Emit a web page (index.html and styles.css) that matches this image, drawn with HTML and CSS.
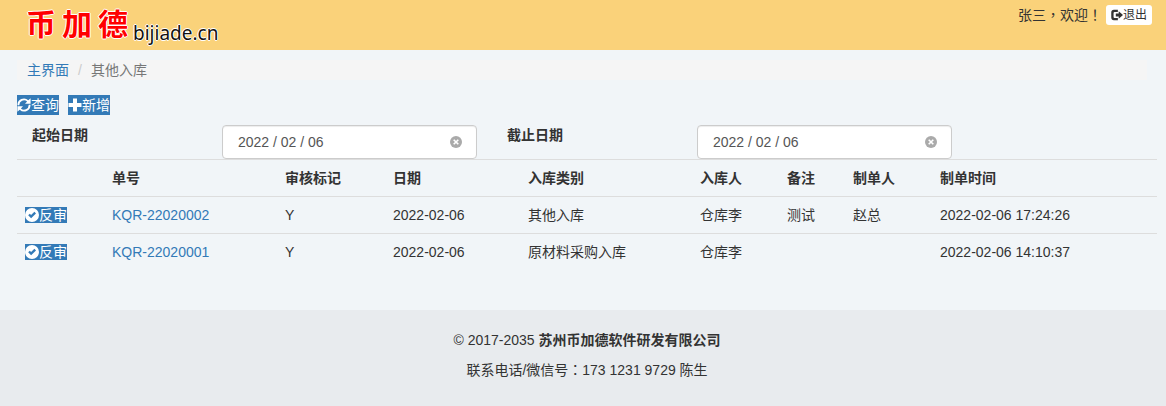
FILE: index.html
```
<!DOCTYPE html>
<html lang="zh-CN">
<head>
    <meta charset="utf-8">
    <title>其他入库</title>
    <meta name="viewport" content="width=device-width, initial-scale=1">
    <link rel="stylesheet" href="styles.css">
</head>
<body>
    <!-- shared icons -->
    <svg class="sprite" aria-hidden="true">
        <symbol id="icon-logout" viewBox="0 0 14 14">
            <path d="M8 1H3.400Q.3 1 .3 4v6q0 3 3.100 3H8v-2.400H4.200q-1.200 0-1.200-1.200V4.800q0-1.200 1.200-1.200H8z"/>
            <path d="M9 2.500L14 7l-5 4.500V8.800H5.600V5.200H9z"/>
        </symbol>
        <symbol id="icon-refresh" viewBox="0 0 14 14">
            <path d="M.5 7.200A6.400 6.400 0 0 1 11.300 2.300L13.600.2v5.600H8l2.100-2.200A4.700 4.700 0 0 0 2.300 7.200z"/>
            <path d="M13.500 6.800a6.400 6.400 0 0 1-10.800 4.900L.4 13.800V8.200H6l-2.100 2.200a4.700 4.700 0 0 0 7.800-3.600z"/>
        </symbol>
        <symbol id="icon-plus" viewBox="0 0 14 14">
            <path d="M5 .5h4V5h4.500v4H9v4.500H5V9H.5V5H5z"/>
        </symbol>
        <symbol id="icon-ok" viewBox="0 0 14 14">
            <path fill-rule="evenodd" d="M7 0a7 7 0 1 1 0 14A7 7 0 0 1 7 0zM3.200 7.200l2.900 3L11 5.400 9.400 3.800 6.100 7.100 4.800 5.700z"/>
        </symbol>
        <symbol id="icon-clear" viewBox="0 0 12 12">
            <circle cx="6" cy="6" r="6"/>
            <path d="M3.700 3.700l4.600 4.600M8.300 3.700L3.700 8.300" stroke="#fff" stroke-width="1.600"/>
        </symbol>
    </svg>

    <header class="topbar">
        <a class="logo" href="#"><span class="logo-name"><span>币</span><span>加</span><span>德</span></span><span class="logo-site">bijiade.cn</span></a>
        <div class="user">
            <span>张三<span class="punct" lang="zh-TW">，</span>欢迎<span class="punct" lang="zh-TW">！</span></span>
            <button type="button" class="btn-logout"><svg class="icon"><use href="#icon-logout"/></svg>退出</button>
        </div>
    </header>

    <main class="content">
        <ol class="breadcrumb">
            <li><a href="#">主界面</a></li>
            <li class="active">其他入库</li>
        </ol>

        <form>
            <div class="toolbar">
                <button type="button" class="btn-tool"><svg class="icon"><use href="#icon-refresh"/></svg>查询</button>
                <button type="button" class="btn-tool"><svg class="icon"><use href="#icon-plus"/></svg>新增</button>
            </div>
            <div class="filters">
                <label for="date-from">起始日期</label>
                <div class="date-box">
                    <input type="text" id="date-from" value="2022 / 02 / 06">
                    <button type="button" class="clear" aria-label="清除"><svg><use href="#icon-clear"/></svg></button>
                </div>
                <label for="date-to">截止日期</label>
                <div class="date-box">
                    <input type="text" id="date-to" value="2022 / 02 / 06">
                    <button type="button" class="clear" aria-label="清除"><svg><use href="#icon-clear"/></svg></button>
                </div>
            </div>
        </form>

        <table class="table">
            <thead>
                <tr>
                    <th class="col-action"></th>
                    <th class="col-no">单号</th>
                    <th class="col-mark">审核标记</th>
                    <th class="col-date">日期</th>
                    <th class="col-type">入库类别</th>
                    <th class="col-person">入库人</th>
                    <th class="col-note">备注</th>
                    <th class="col-person">制单人</th>
                    <th>制单时间</th>
                </tr>
            </thead>
            <tbody>
                <tr>
                    <td><button type="button" class="btn-row"><svg class="icon"><use href="#icon-ok"/></svg>反审</button></td>
                    <td><a href="#">KQR-22020002</a></td>
                    <td>Y</td>
                    <td>2022-02-06</td>
                    <td>其他入库</td>
                    <td>仓库李</td>
                    <td>测试</td>
                    <td>赵总</td>
                    <td>2022-02-06 17:24:26</td>
                </tr>
                <tr>
                    <td><button type="button" class="btn-row"><svg class="icon"><use href="#icon-ok"/></svg>反审</button></td>
                    <td><a href="#">KQR-22020001</a></td>
                    <td>Y</td>
                    <td>2022-02-06</td>
                    <td>原材料采购入库</td>
                    <td>仓库李</td>
                    <td></td>
                    <td></td>
                    <td>2022-02-06 14:10:37</td>
                </tr>
            </tbody>
        </table>
    </main>

    <footer class="footer">
        <p>© 2017-2035 <strong>苏州币加德软件研发有限公司</strong></p>
        <p>联系电话/微信号<span class="punct" lang="zh-TW">：</span>173 1231 9729 陈生</p>
    </footer>
</body>
</html>
```
FILE: styles.css
```
* {
    box-sizing: border-box;
}
body {
    margin: 0;
    min-height: 100vh;
    display: flex;
    flex-direction: column;
    font-family: "Liberation Sans", "Noto Sans CJK SC", sans-serif;
    font-size: 14px;
    line-height: 20px;
    color: #333;
    background: #f1f5f8;
}
a {
    color: #337ab7;
    text-decoration: none;
}
button {
    display: flex;
    align-items: center;
    border: none;
    padding: 0;
    font: inherit;
    cursor: pointer;
}
.sprite {
    display: none;
}
.icon {
    width: 14px;
    height: 14px;
    flex: none;
    fill: currentColor;
}
/* centred full-width punctuation */
.punct {
    font-family: "Noto Sans CJK TC", sans-serif;
    line-height: 1;
}

/* top bar */
.topbar {
    display: flex;
    justify-content: space-between;
    align-items: flex-start;
    height: 50px;
    padding: 0 14px 0 26px;
    background: #fad27a;
}
.logo {
    display: flex;
    align-items: flex-start;
    color: #111;
    text-shadow: 1px 0 #fff, -1px 0 #fff, 0 1px #fff, 0 -1px #fff;
}
.logo-name {
    display: flex;
    gap: 6px;
    padding-right: 5px;
    font-size: 30px;
    line-height: 50px;
    font-weight: bold;
    color: #f00;
}
.logo-site {
    font-family: "Noto Sans", sans-serif;
    font-size: 19px;
    line-height: 66px;
}
.user {
    display: flex;
    gap: 4px;
    padding-top: 5px;
}
.btn-logout {
    height: 20px;
    padding: 0 5px;
    border-radius: 3px;
    font-size: 12px;
    color: #333;
    background: #fff;
}
.btn-logout .icon {
    width: 12px;
    height: 12px;
}

/* content */
.content {
    flex: 1;
    padding: 10px 9px 0 17px;
}
.breadcrumb {
    display: flex;
    margin: 0 10px 15px 0;
    padding: 0 10px;
    list-style: none;
    background: #f5f5f5;
}
.breadcrumb li + li::before {
    content: "/";
    padding: 0 9px;
    color: #ccc;
}
.breadcrumb .active {
    color: #777;
}
.toolbar {
    display: flex;
    gap: 9px;
    margin-bottom: 10px;
}
.btn-tool,
.btn-row {
    color: #fff;
    background: #337ab7;
}
.btn-tool {
    height: 20px;
}
.btn-row {
    height: 16px;
    line-height: 16px;
}
.filters {
    display: grid;
    grid-template-columns: 2fr 3fr 2fr 3fr 2fr;
}
.filters label {
    padding: 0 15px;
    font-weight: bold;
}
.date-box {
    position: relative;
    padding: 0 15px;
}
.date-box input {
    display: block;
    width: 100%;
    height: 34px;
    padding: 6px 15px;
    border: 1px solid #ccc;
    border-radius: 4px;
    font: inherit;
    color: #555;
    background: #fff;
    box-shadow: inset 0 1px 1px rgba(0,0,0,0.075);
}
.clear {
    position: absolute;
    top: 11px;
    right: 30px;
    background: none;
}
.clear svg {
    width: 12px;
    height: 12px;
    fill: #aaa;
}
.table {
    width: 100%;
    margin-bottom: 20px;
    table-layout: fixed;
    border-collapse: collapse;
}
.table th,
.table td {
    height: 37px;
    padding: 0 8px;
    border-top: 1px solid #ddd;
    text-align: left;
}
.table .col-action {
    width: 87px;
}
.table .col-no {
    width: 173px;
}
.table .col-mark {
    width: 108px;
}
.table .col-date {
    width: 135px;
}
.table .col-type {
    width: 172px;
}
.table .col-person {
    width: 87px;
}
.table .col-note {
    width: 66px;
}

/* footer */
.footer {
    padding: 20px 9px 16px 17px;
    text-align: center;
    background: #e8ebee;
}
.footer p {
    margin: 0 0 10px;
}
```
